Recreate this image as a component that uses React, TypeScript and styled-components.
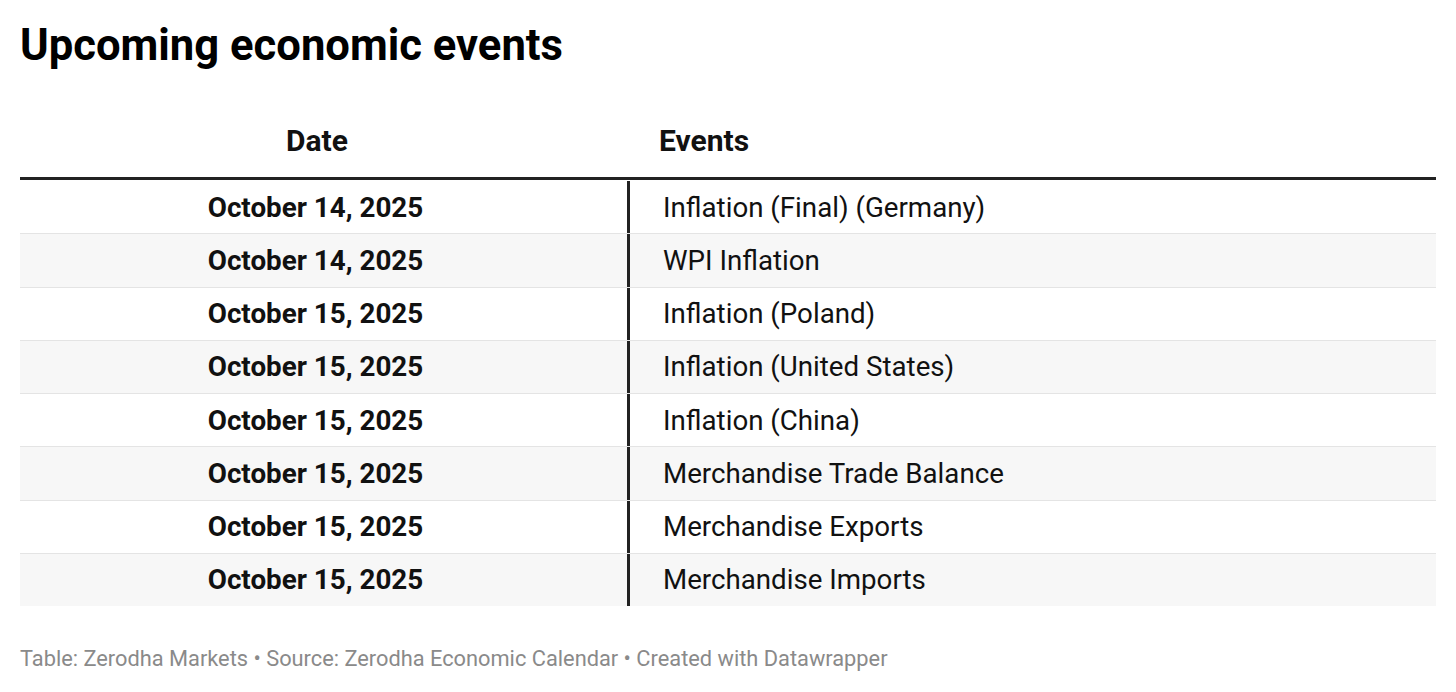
import React from "react";
import styled, { createGlobalStyle } from "styled-components";

const GlobalStyle = createGlobalStyle`
  body {
    margin: 0;
    background: #ffffff;
    font-family: Roboto, "Liberation Sans", sans-serif;
    color: #181818;
  }
`;

const Page = styled.div`
  padding: 17px 20px 0 20px;
`;

const Title = styled.h1`
  margin: 0;
  font-size: 43.6px;
  font-weight: 700;
  line-height: 58px;
  color: #000;
`;

const Table = styled.div`
  margin-top: 44px;
  display: flex;
  flex-direction: column;
`;

const HeaderRow = styled.div`
  display: grid;
  grid-template-columns: 610px 1fr;
  height: 61px;
  align-items: start;
  padding-top: 4px;
  border-bottom: 3px solid #222;
  box-sizing: border-box;
`;

const HeaderCell = styled.div<{ $center?: boolean }>`
  font-size: 30px;
  font-weight: 700;
  line-height: 36px;
  color: #111;
  text-align: ${(p) => (p.$center ? "center" : "left")};
  padding: ${(p) => (p.$center ? "0 16px 0 0" : "0 0 0 29px")};
`;

const Row = styled.div<{ $striped: boolean; $first: boolean }>`
  display: grid;
  grid-template-columns: 610px 1fr;
  height: 53.25px;
  box-sizing: border-box;
  background: ${(p) => (p.$striped ? "#f7f7f7" : "#ffffff")};
  border-top: 1px solid ${(p) => (p.$first ? "transparent" : "#e4e4e4")};
`;

const DateCell = styled.div`
  display: flex;
  align-items: center;
  justify-content: center;
  padding-right: 16px;
  font-size: 27.8px;
  font-weight: 700;
  color: #111;
  border-right: 3px solid #222;
`;

const EventCell = styled.div`
  display: flex;
  align-items: center;
  padding-left: 33px;
  font-size: 27.7px;
  font-weight: 400;
  color: #111;
`;

const Footer = styled.p`
  margin: 40px 0 0 0;
  font-size: 21.8px;
  line-height: 26px;
  color: #8a8a8a;
`;

const rows = [
  ["October 14, 2025", "Inflation (Final) (Germany)"],
  ["October 14, 2025", "WPI Inflation"],
  ["October 15, 2025", "Inflation (Poland)"],
  ["October 15, 2025", "Inflation (United States)"],
  ["October 15, 2025", "Inflation (China)"],
  ["October 15, 2025", "Merchandise Trade Balance"],
  ["October 15, 2025", "Merchandise Exports"],
  ["October 15, 2025", "Merchandise Imports"],
];

export default function App() {
  return (
    <Page>
      <GlobalStyle />
      <Title>Upcoming economic events</Title>
      <Table>
        <HeaderRow>
          <HeaderCell $center>Date</HeaderCell>
          <HeaderCell>Events</HeaderCell>
        </HeaderRow>
        {rows.map(([date, event], i) => (
          <Row key={i} $striped={i % 2 === 1} $first={i === 0}>
            <DateCell>{date}</DateCell>
            <EventCell>{event}</EventCell>
          </Row>
        ))}
      </Table>
      <Footer>
        Table: Zerodha Markets • Source: Zerodha Economic Calendar • Created with Datawrapper
      </Footer>
    </Page>
  );
}
